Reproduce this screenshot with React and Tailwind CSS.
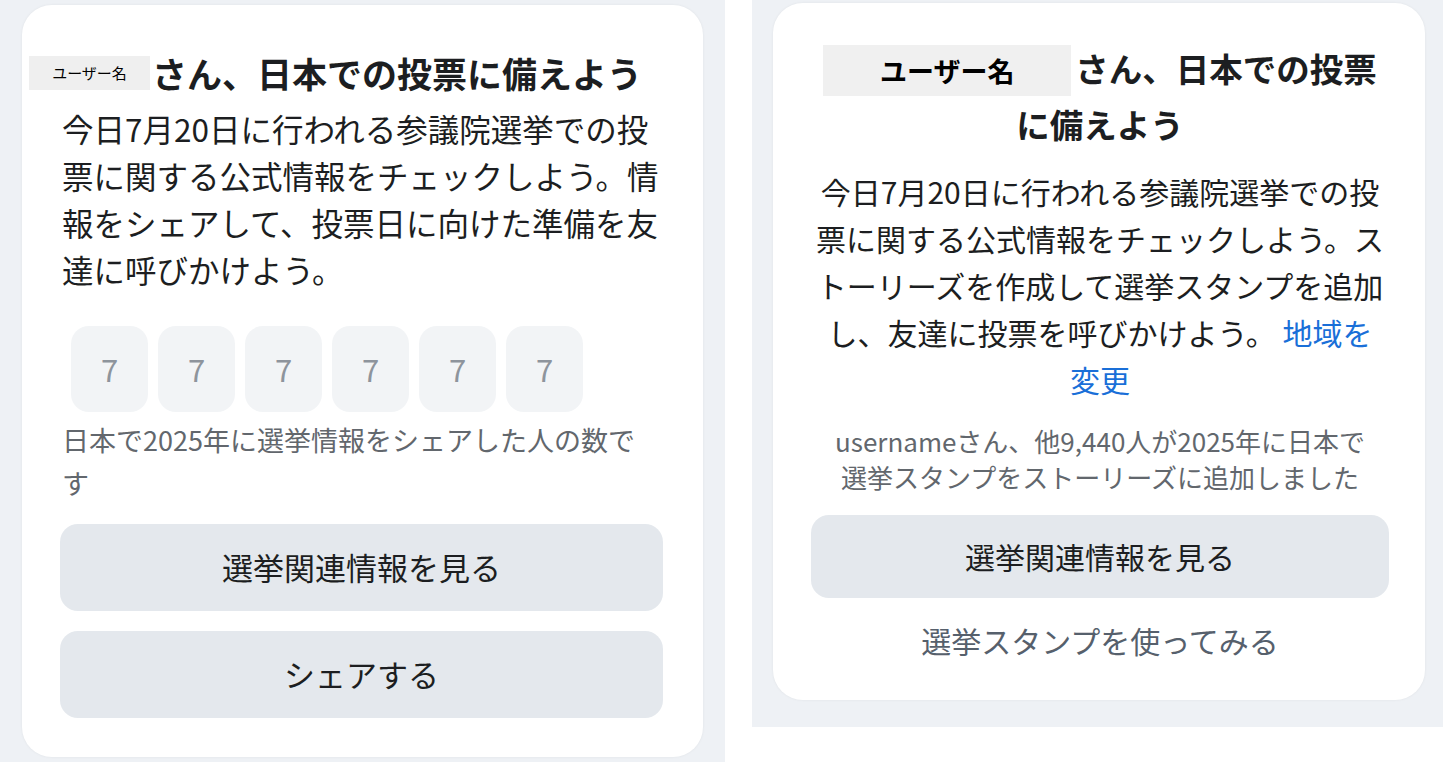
export default function App() {
  const font = { fontFamily: '"Noto Sans CJK JP", "Noto Sans", sans-serif' };
  return (
    <div className="flex bg-white w-[1455px] h-[762px] overflow-hidden" style={font}>
      {/* Left panel */}
      <div className="w-[725px] h-[762px] bg-[#eef1f5] pl-[22px] pt-[5px] shrink-0">
        <div className="w-[681px] bg-white rounded-[30px] shadow-[0_0_3px_rgba(0,0,0,0.06)] pl-[38px] pr-[40px] pt-[46px] pb-[39px] text-[#1c1e21]">
          <div className="flex items-center h-[44px] -ml-[31px] whitespace-nowrap">
            <div className="w-[121px] h-[34px] bg-[#efefef] flex items-center justify-center text-[15px] text-black">
              ユーザー名
            </div>
            <div className="ml-[2px] text-[35px] font-bold leading-[44px]">さん、日本での投票に備えよう</div>
          </div>
          <p className="mt-[10px] ml-[2px] w-[600px] text-[31.5px] leading-[47px]">
            今日7月20日に行われる参議院選挙での投票に関する公式情報をチェックしよう。情報をシェアして、投票日に向けた準備を友達に呼びかけよう。
          </p>
          <div className="mt-[33px] ml-[11px] flex gap-[10px]">
            {[0, 1, 2, 3, 4, 5].map((i) => (
              <div
                key={i}
                className="w-[77px] h-[86px] rounded-[18px] bg-[#f2f4f6] flex items-center justify-center text-[31px] text-[#8e949c]"
              >
                7
              </div>
            ))}
          </div>
          <p className="mt-[6px] ml-[2px] w-[585px] text-[27px] leading-[43px] text-[#62676d]">
            日本で2025年に選挙情報をシェアした人の数です
          </p>
          <button className="mt-[20px] w-full h-[87px] rounded-[18px] bg-[#e4e8ed] text-[31px] text-[#1c1e21] flex items-center justify-center">
            選挙関連情報を見る
          </button>
          <button className="mt-[20px] w-full h-[87px] rounded-[18px] bg-[#e4e8ed] text-[31px] text-[#1c1e21] flex items-center justify-center">
            シェアする
          </button>
        </div>
      </div>

      {/* Right panel */}
      <div className="ml-[27px] w-[691px] h-[727px] bg-[#eef1f5] pl-[21px] pt-[3px] shrink-0">
        <div className="w-[652px] bg-white rounded-[30px] shadow-[0_0_3px_rgba(0,0,0,0.06)] pl-[38px] pr-[36px] pt-[37px] pb-[38px] text-[#1c1e21] text-center">
          <h1 className="text-[33.5px] font-bold leading-[56px]">
            <span className="inline-flex align-middle -mt-[4px] w-[248px] h-[51px] bg-[#f0f0f0] items-center justify-center text-[27px] font-bold text-black mr-[4px]">
              ユーザー名
            </span>
            さん、日本での投票に備えよう
          </h1>
          <p className="mt-[16px] mx-auto w-[574px] text-[30px] leading-[47px]">
            今日7月20日に行われる参議院選挙での投票に関する公式情報をチェックしよう。ストーリーズを作成して選挙スタンプを追加し、友達に投票を呼びかけよう。{' '}
            <span className="text-[#1a6fd8]">地域を変更</span>
          </p>
          <p className="mt-[20px] text-[26px] leading-[36px] text-[#62676d]">
            usernameさん、他9,440人が2025年に日本で
            <br />
            選挙スタンプをストーリーズに追加しました
          </p>
          <button className="mt-[20px] w-full h-[83px] rounded-[18px] bg-[#e4e8ed] text-[30px] text-[#1c1e21] flex items-center justify-center">
            選挙関連情報を見る
          </button>
          <div className="mt-[20px] text-[30px] leading-[44px] text-[#56606c]">選挙スタンプを使ってみる</div>
        </div>
      </div>
    </div>
  );
}
